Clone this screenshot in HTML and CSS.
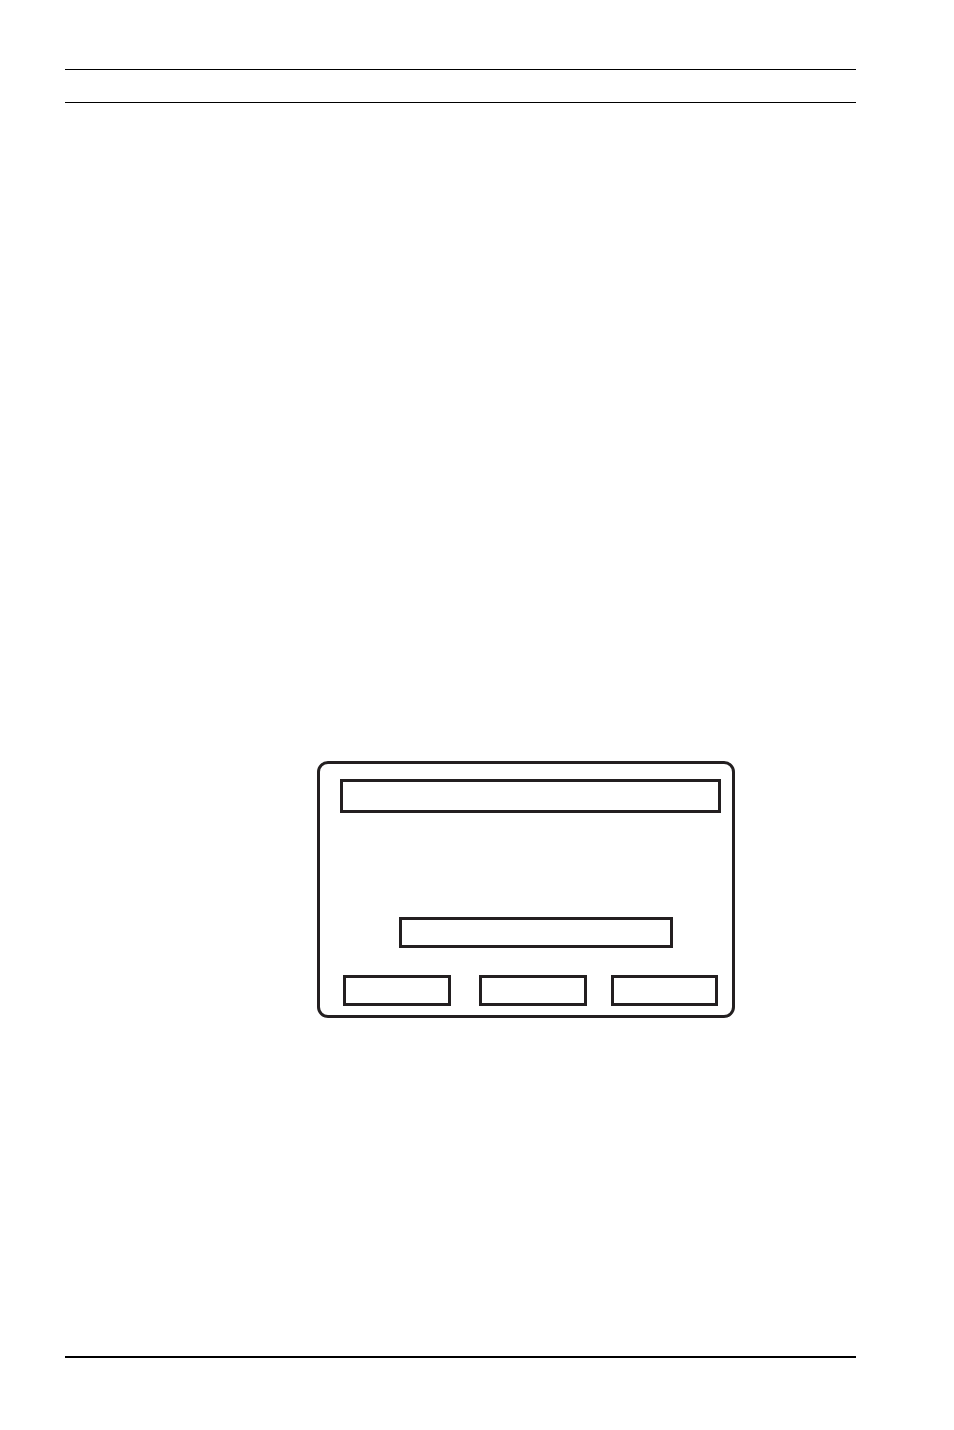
FILE: index.html
```html
<!DOCTYPE html>
<html lang="en">
<head>
  <meta charset="UTF-8" />
  <title>Display Screen</title>
  <link rel="stylesheet" href="styles.css">
</head>
<body>

<div class="page">
  <!-- running head rules -->
  <div class="head-rules"></div>

  <!-- screen figure -->
  <div class="figure">
    <div class="screen">
      <div class="title-bar"></div>
      <div class="field-bar"></div>
      <div class="soft-keys">
        <div class="key key-1"></div>
        <div class="key key-2"></div>
        <div class="key key-3"></div>
      </div>
    </div>
  </div>

  <div class="foot-rule"></div>
</div>

</body>
</html>
```

FILE: styles.css
```css
* { margin: 0; padding: 0; box-sizing: border-box; }

html, body {
  background: #fff;
  font-family: "Liberation Sans", Arial, sans-serif;
}

.page {
  width: 791px;
  margin-left: 65px;
  padding-top: 69px;
}

.head-rules {
  height: 34px;
  border-top: 1.5px solid #000;
  border-bottom: 1.5px solid #000;
}

.figure {
  padding-top: 658px;
  padding-left: 252px;
}

.screen {
  width: 418px;
  height: 257px;
  border: 3px solid #231f20;
  border-radius: 11px;
  display: flex;
  flex-direction: column;
}

.title-bar {
  width: 381px;
  height: 34px;
  margin: 15px 0 0 20px;
  border: 3px solid #231f20;
}

.field-bar {
  width: 274px;
  height: 31px;
  margin: 104px 0 0 79px;
  border: 3px solid #231f20;
}

.soft-keys {
  display: flex;
  margin: 27px 0 0 23px;
}

.key {
  width: 108px;
  height: 31px;
  border: 3px solid #231f20;
}

.key-2 { margin-left: 28px; }

.key-3 {
  width: 107px;
  margin-left: 24px;
}

.foot-rule {
  margin-top: 338px;
  height: 2px;
  background: #000;
}
```
